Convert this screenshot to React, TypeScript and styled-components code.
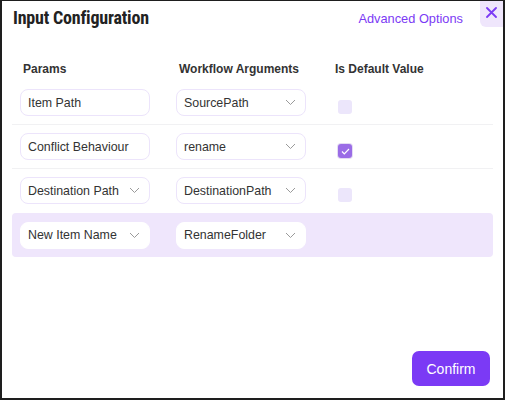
import React from "react";
import styled, { createGlobalStyle } from "styled-components";

const GlobalStyle = createGlobalStyle`
  html, body {
    margin: 0;
    padding: 0;
    background: #ffffff;
  }
  body {
    font-family: "Liberation Sans", Arial, sans-serif;
    color: #333333;
  }
`;

interface IRow {
  param: string;
  paramIsSelect: boolean;
  argument: string;
  showCheck: boolean;
  checked: boolean;
  active?: boolean;
}

const rows: IRow[] = [
  { param: "Item Path", paramIsSelect: false, argument: "SourcePath", showCheck: true, checked: false },
  { param: "Conflict Behaviour", paramIsSelect: false, argument: "rename", showCheck: true, checked: true },
  { param: "Destination Path", paramIsSelect: true, argument: "DestinationPath", showCheck: true, checked: false },
  { param: "New Item Name", paramIsSelect: true, argument: "RenameFolder", showCheck: false, checked: false, active: true },
];

function Chevron() {
  return (
    <svg width="11" height="7" viewBox="0 0 11 7" fill="none">
      <path d="M1 1l4.5 4.5L10 1" stroke="#9a9a9a" strokeWidth="1" />
    </svg>
  );
}

function App() {
  return (
    <>
      <GlobalStyle />
      <Frame>
        <Header>
          <Title>Input Configuration</Title>
          <AdvancedLink>Advanced Options</AdvancedLink>
          <CloseButton aria-label="close">
            <svg width="11" height="11" viewBox="0 0 11 11">
              <path d="M1 1l9 9M10 1l-9 9" stroke="#7b3af5" strokeWidth="1.8" strokeLinecap="round" />
            </svg>
          </CloseButton>
        </Header>
        <Table>
          <HeadRow>
            <HeadCell>Params</HeadCell>
            <HeadCell>Workflow Arguments</HeadCell>
            <HeadCell>Is Default Value</HeadCell>
          </HeadRow>
          {rows.map((r) => (
            <Row key={r.param} $active={r.active}>
              <Field $active={r.active}>
                <span>{r.param}</span>
                {r.paramIsSelect && <Chevron />}
              </Field>
              <Field $active={r.active}>
                <span>{r.argument}</span>
                <Chevron />
              </Field>
              <CheckCell>
                {r.showCheck && (
                  <Check $checked={r.checked}>
                    {r.checked && (
                      <svg width="9" height="7" viewBox="0 0 9 7">
                        <path d="M1 3.5l2.3 2.3L8 1" stroke="#fff" strokeWidth="1.2" fill="none" />
                      </svg>
                    )}
                  </Check>
                )}
              </CheckCell>
            </Row>
          ))}
        </Table>
        <Footer>
          <ConfirmButton>Confirm</ConfirmButton>
        </Footer>
      </Frame>
    </>
  );
}

const Frame = styled.div`
  box-sizing: border-box;
  width: 505px;
  height: 400px;
  border: 1px solid #1e1e1e;
  border-left-width: 2px;
  border-right-width: 2px;
  border-bottom-width: 2px;
  display: flex;
  flex-direction: column;
  position: relative;
  box-shadow: 0 1px 0 #b8b8b8;
`;

const Header = styled.div`
  display: flex;
  align-items: center;
  height: 33px;
  padding-left: 11px;
  padding-right: 40px;
`;

const Title = styled.h1`
  margin: 0;
  flex: 1;
  font-family: "Roboto Condensed", "Roboto", sans-serif;
  font-stretch: condensed;
  font-weight: 700;
  font-size: 18px;
  letter-spacing: -0.2px;
  color: #222222;
`;

const AdvancedLink = styled.a`
  font-size: 12.8px;
  color: #7b3af5;
  margin-top: 2px;
  cursor: pointer;
`;

const CloseButton = styled.button`
  position: absolute;
  top: 0;
  right: 0;
  width: 23px;
  height: 26px;
  border: none;
  padding: 0;
  background: #efe6fc;
  border-bottom-left-radius: 6px;
  display: flex;
  align-items: flex-start;
  justify-content: center;
  padding-top: 6px;
  box-sizing: border-box;
`;

const Table = styled.div`
  margin: 0 10px;
  display: flex;
  flex-direction: column;
  margin-top: 28px;
`;

const columns = `
  display: grid;
  grid-template-columns: 156px 156px 1fr;
  padding: 0 8px;
`;

const HeadRow = styled.div`
  ${columns}
  padding-left: 11px;
  padding-bottom: 5px;
`;

const HeadCell = styled.div`
  font-size: 12px;
  font-weight: 700;
  color: #333333;
`;

const Row = styled.div<{ $active?: boolean }>`
  ${columns}
  align-items: center;
  height: 44px;
  box-sizing: border-box;
  padding-top: ${(p) => (p.$active ? "1px" : "0")};
  border-bottom: 1px solid ${(p) => (p.$active ? "transparent" : "#f1f1f3")};
  background: ${(p) => (p.$active ? "#efe6fc" : "transparent")};
  border-radius: ${(p) => (p.$active ? "4px" : "0")};
  &:nth-of-type(4) {
    border-bottom-color: transparent;
  }
`;

const Field = styled.div<{ $active?: boolean }>`
  box-sizing: border-box;
  width: 130px;
  height: 27px;
  border: 1px solid ${(p) => (p.$active ? "#ffffff" : "#ece4fb")};
  border-radius: 8px;
  background: #ffffff;
  display: flex;
  align-items: center;
  justify-content: space-between;
  padding: 0 9px 0 7px;
  font-size: 12.4px;
  color: #333333;
  white-space: nowrap;
`;

const CheckCell = styled.div`
  display: flex;
  align-items: center;
  padding-left: 6px;
  padding-top: 9px;
`;

const Check = styled.div<{ $checked: boolean }>`
  width: 14px;
  height: 14px;
  border-radius: 3px;
  background: ${(p) => (p.$checked ? "#9a6ce6" : "#ece6fb")};
  display: flex;
  align-items: center;
  justify-content: center;
  box-shadow: ${(p) => (p.$checked ? "0 0 0 1px #e4dcf3" : "none")};
`;

const Footer = styled.div`
  margin-top: auto;
  display: flex;
  justify-content: flex-end;
  padding: 0 13px 12px 0;
`;

const ConfirmButton = styled.button`
  width: 78px;
  height: 35px;
  border: none;
  border-radius: 7px;
  background: #7b3af5;
  color: #ffffff;
  font-family: "Liberation Sans", Arial, sans-serif;
  font-size: 14px;
  cursor: pointer;
`;

export default App;
